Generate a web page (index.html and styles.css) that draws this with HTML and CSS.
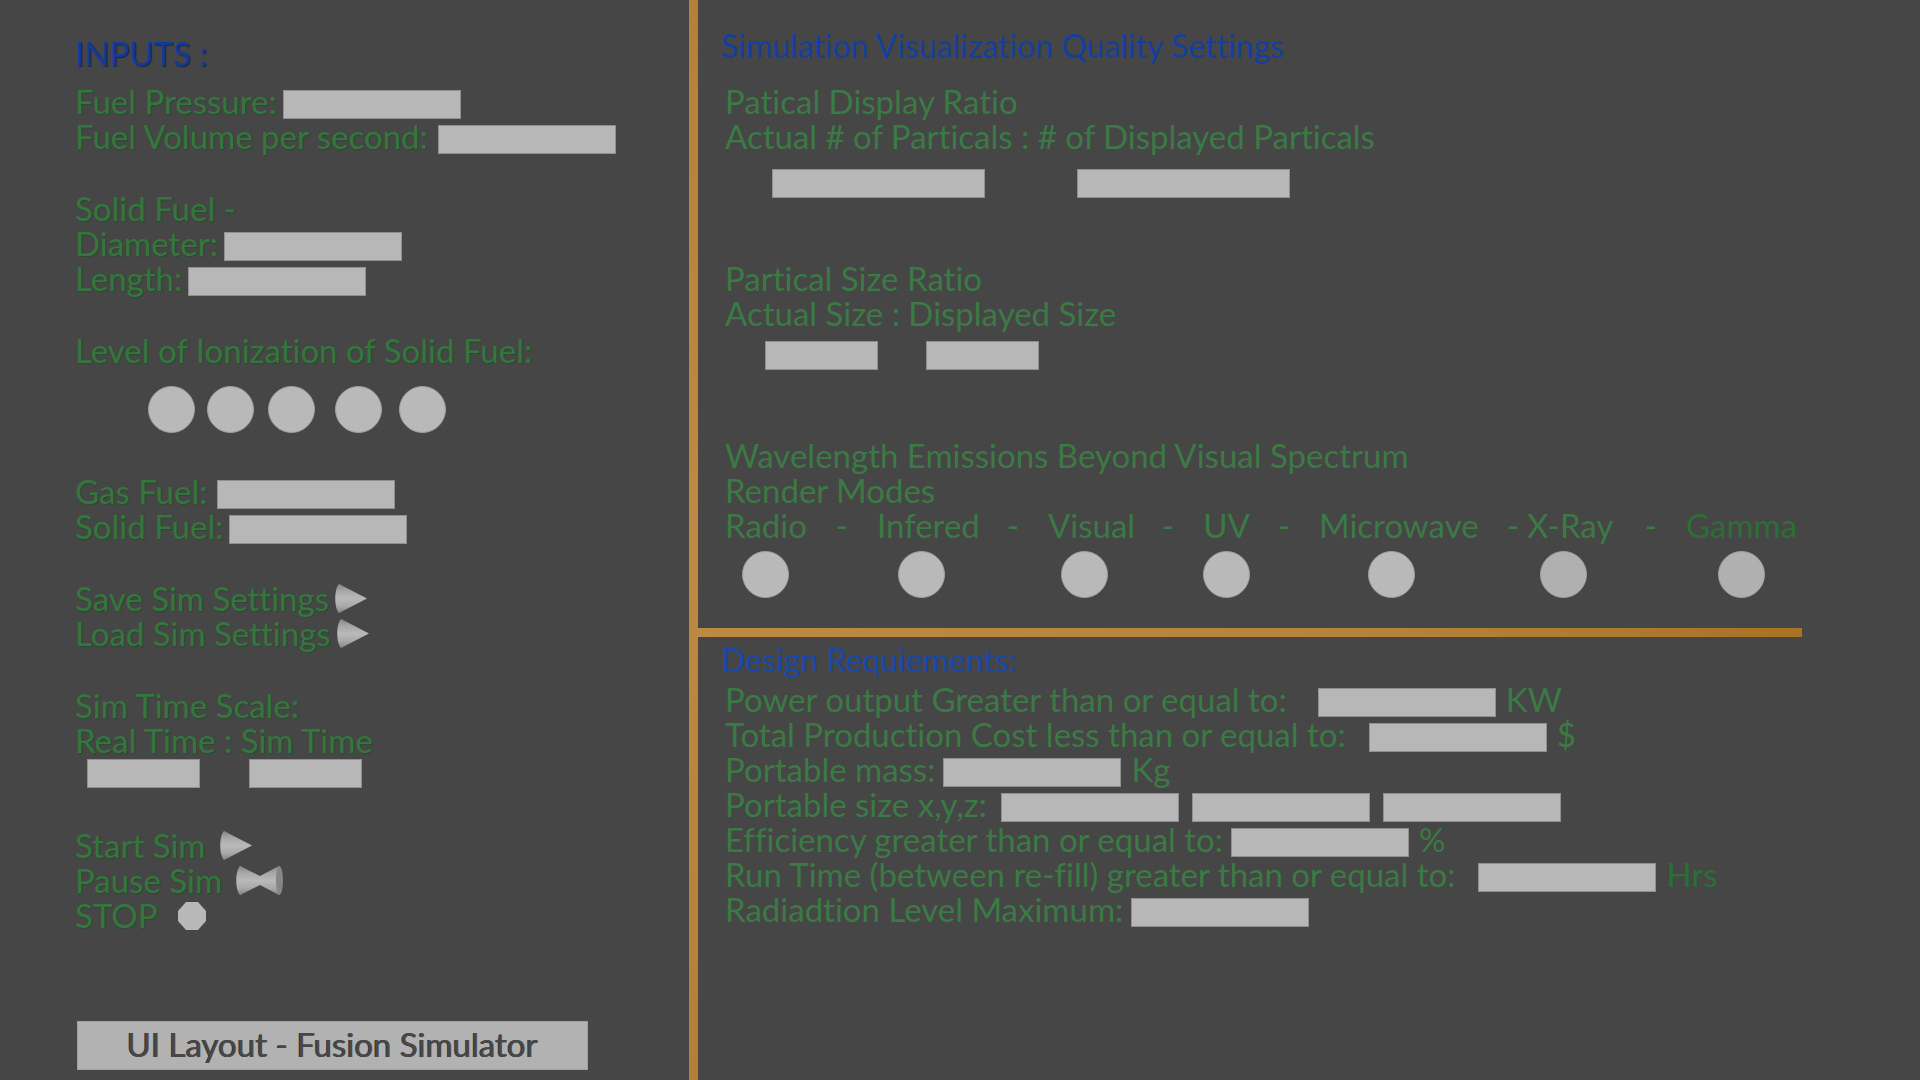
FILE: index.html
```html
<!DOCTYPE html>
<html lang="en">
<head>
<meta charset="utf-8">
<meta name="viewport" content="width=device-width, initial-scale=1">
<title>UI Layout - Fusion Simulator</title>
<link rel="stylesheet" href="styles.css">
</head>
<body>
<svg width="0" height="0" class="defs" aria-hidden="true">
  <defs>
    <linearGradient id="cone" x1="0" y1="0" x2="0" y2="1">
      <stop offset="0" stop-color="#858585"/>
      <stop offset=".25" stop-color="#a8a8a8"/>
      <stop offset=".5" stop-color="#b9b9b9"/>
      <stop offset=".75" stop-color="#aaaaaa"/>
      <stop offset="1" stop-color="#848484"/>
    </linearGradient>
    <symbol id="play" viewBox="0 0 32 29">
      <path d="M4 0 Q5 0 6 1 L32 14.500 L6 28 Q5 29 4 29 C-1 24 -1 5 4 0 Z" fill="url(#cone)"/>
    </symbol>
  </defs>
</svg>
<div class="page">
  <main class="inputs">
    <h2 class="heading heading-inputs">INPUTS :</h2>
    <form class="groups">
      <div>
        <div class="row gap-s"><label for="pressure">Fuel Pressure:</label><input class="box" id="pressure" type="text"></div>
        <div class="row gap-m"><label for="volume">Fuel Volume per second:</label><input class="box" id="volume" type="text"></div>
      </div>
      <div>
        <p class="row">Solid Fuel -</p>
        <div class="row gap-s"><label for="diameter">Diameter:</label><input class="box" id="diameter" type="text"></div>
        <div class="row gap-s"><label for="length">Length:</label><input class="box" id="length" type="text"></div>
      </div>
      <fieldset>
        <legend class="row">Level of Ionization of Solid Fuel:</legend>
        <div class="levels">
          <input class="dot" type="radio" name="level" aria-label="Level 1">
          <input class="dot" type="radio" name="level" aria-label="Level 2">
          <input class="dot" type="radio" name="level" aria-label="Level 3">
          <input class="dot" type="radio" name="level" aria-label="Level 4">
          <input class="dot" type="radio" name="level" aria-label="Level 5">
        </div>
      </fieldset>
      <div>
        <div class="row gap-m"><label for="gas">Gas Fuel:</label><input class="box" id="gas" type="text"></div>
        <div class="row gap-s"><label for="solid">Solid Fuel:</label><input class="box" id="solid" type="text"></div>
      </div>
      <div>
        <button class="row action gap-s" type="button">Save Sim Settings <svg class="cone"><use href="#play"/></svg></button>
        <button class="row action gap-s" type="button">Load Sim Settings <svg class="cone"><use href="#play"/></svg></button>
      </div>
      <fieldset>
        <legend class="row">Sim Time Scale:</legend>
        <p class="row">Real Time : Sim Time</p>
        <div class="pair pair-time">
          <input class="box box-s" type="text" aria-label="Real Time">
          <input class="box box-s" type="text" aria-label="Sim Time">
        </div>
      </fieldset>
      <div>
        <button class="row action gap-l" type="button">Start Sim <svg class="cone"><use href="#play"/></svg></button>
        <button class="row action gap-l" type="button">Pause Sim
          <svg class="bow" viewBox="0 0 47 29">
            <path d="M4 0 Q5 0 6 1 L24 10 L41 1 Q43 0 44 0 V29 Q43 29 41 28 L24 19 L6 28 Q5 29 4 29 C-1 24 -1 5 4 0 Z" fill="url(#cone)"/>
            <ellipse cx="43.500" cy="14.500" rx="3.500" ry="14" fill="#868686"/>
          </svg></button>
        <button class="row action gap-xl" type="button">STOP
          <svg class="stop" viewBox="0 0 28 28"><path d="M8 0H20L28 9V19L20 28H8L0 19V9Z" fill="#b8b8b8"/></svg></button>
      </div>
    </form>
    <h1 class="title">UI Layout - Fusion Simulator</h1>
  </main>
  <div class="divider"></div>
  <div class="settings">
    <section class="quality">
      <h2 class="heading">Simulation Visualization Quality Settings</h2>
      <fieldset class="ratio-count">
        <legend class="row">Patical Display Ratio</legend>
        <p class="row">Actual # of Particals : # of Displayed Particals</p>
        <div class="pair pair-count">
          <input class="box box-l" type="text" aria-label="Actual # of Particals">
          <input class="box box-l" type="text" aria-label="# of Displayed Particals">
        </div>
      </fieldset>
      <fieldset class="ratio-size">
        <legend class="row">Partical Size Ratio</legend>
        <p class="row">Actual Size : Displayed Size</p>
        <div class="pair pair-size">
          <input class="box box-s" type="text" aria-label="Actual Size">
          <input class="box box-s" type="text" aria-label="Displayed Size">
        </div>
      </fieldset>
      <fieldset>
        <legend class="row">Wavelength Emissions Beyond Visual Spectrum</legend>
        <p class="row">Render Modes</p>
        <div class="modes">
          <div class="mode"><label>Radio<input class="dot" type="radio" name="mode"></label><span>-</span></div>
          <div class="mode mode-left"><label>Infered<input class="dot" type="radio" name="mode"></label><span>-</span></div>
          <div class="mode mode-left"><label>Visual<input class="dot" type="radio" name="mode"></label><span>-</span></div>
          <div class="mode"><label>UV<input class="dot" type="radio" name="mode"></label><span>-</span></div>
          <div class="mode mode-left mode-tight"><label>Microwave<input class="dot" type="radio" name="mode"></label><span>-</span></div>
          <div class="mode mode-left"><label>X-Ray<input class="dot dot-dim" type="radio" name="mode"></label><span>-</span></div>
          <div class="mode"><label class="dim">Gamma<input class="dot dot-dim" type="radio" name="mode"></label></div>
        </div>
      </fieldset>
    </section>
    <hr class="rule">
    <section class="design">
      <h2 class="heading">Design Requiements:</h2>
      <form class="requirements">
        <div class="row gap-xl"><label for="power">Power output Greater than or equal to:</label><span class="value"><input class="box" id="power" type="text">KW</span></div>
        <div class="row gap-l"><label for="cost">Total Production Cost less than or equal to:</label><span class="value"><input class="box" id="cost" type="text">$</span></div>
        <div class="row gap-s"><label for="mass">Portable mass:</label><span class="value"><input class="box" id="mass" type="text">Kg</span></div>
        <div class="row gap-m"><label for="size-x">Portable size x,y,z:</label><span class="value value-xyz"><input class="box" id="size-x" type="text"><input class="box" type="text" aria-label="Portable size y"><input class="box" type="text" aria-label="Portable size z"></span></div>
        <div class="row gap-s"><label for="efficiency">Efficiency greater than or equal to:</label><span class="value"><input class="box" id="efficiency" type="text">%</span></div>
        <div class="row gap-l"><label for="runtime">Run Time (between re-fill) greater than or equal to:</label><span class="value"><input class="box" id="runtime" type="text"><span class="dim">Hrs</span></span></div>
        <div class="row gap-s"><label for="radiation">Radiadtion Level Maximum:</label><input class="box" id="radiation" type="text"></div>
      </form>
    </section>
  </div>
</div>
</body>
</html>
```
FILE: styles.css
```css
* {
  box-sizing: border-box;
  margin: 0;
  padding: 0;
}

body {
  background: #464646;
  color: #3b7a44;
  font: 33px/35px Lato, "Liberation Sans", sans-serif;
  font-variant-ligatures: none;
}

fieldset {
  border: 0;
  min-width: 0;
}

.defs {
  position: absolute;
}

.page {
  display: grid;
  grid-template-columns: 689fr 9px 1222fr;
  min-height: 100vh;
}

.divider {
  background: linear-gradient(#b48136, #bc8a42 50%, #b38036);
}

.inputs {
  display: flex;
  flex-direction: column;
  padding: 36px 72px 10px 75px;
  color: #35763f;
  text-shadow: 1px 1px 1px #2a4a2f;
}

.heading {
  font-size: 32px;
  font-weight: 400;
  color: #153f9f;
}

.heading-inputs {
  margin-bottom: 13px;
  font-size: 33px;
  color: #133a98;
  text-shadow: 1px 1px 1px #1a2546;
}

.groups {
  display: flex;
  flex-direction: column;
  gap: 37px;
}

.row {
  display: flex;
  align-items: flex-end;
  height: 35px;
  white-space: nowrap;
}

.gap-s { gap: 6px; }
.gap-m { gap: 10px; }
.gap-l { gap: 14px; }
.gap-xl { gap: 20px; }

.requirements .gap-s { gap: 8px; }
.requirements .gap-m { gap: 14px; }
.requirements .gap-l { gap: 23px; }
.requirements .gap-xl { gap: 31px; }

.box {
  width: 178px;
  height: 29px;
  padding: 0 8px;
  border: 1px solid #909090;
  background: #b7b7b7;
  color: #333;
  font: 20px Lato, "Liberation Sans", sans-serif;
}

.box-s { width: 113px; }
.box-l { width: 213px; }

.dot {
  appearance: none;
  width: 47px;
  height: 47px;
  border: 1px solid #a0a0a0;
  border-radius: 50%;
  background: #b9b9b9;
}

.dot:checked { background: #e0e0e0; }
.dot-dim { background: #b0b0b0; }

.levels {
  display: grid;
  grid-template-columns: 59px 61px 67px 64px 47px;
  padding: 18px 0 4px 73px;
}

.action {
  border: 0;
  background: none;
  color: inherit;
  font: inherit;
  font-variant-ligatures: none;
  text-shadow: inherit;
  cursor: pointer;
}

.cone {
  width: 32px;
  height: 29px;
}

.action svg { margin-bottom: 3px; }

.bow {
  width: 47px;
  height: 29px;
}

.stop {
  width: 28px;
  height: 28px;
}

.pair { display: flex; }

.pair-time {
  gap: 49px;
  padding: 1px 0 3px 12px;
}

.pair-count {
  gap: 92px;
  padding: 15px 0 0 47px;
}

.pair-size {
  gap: 48px;
  padding: 10px 0 0 40px;
}

.title {
  width: 511px;
  height: 49px;
  margin: auto 0 0 2px;
  border: 1px solid #a0a0a0;
  background: #b2b2b2;
  color: #484848;
  font-size: 33px;
  font-weight: 400;
  line-height: 44px;
  text-align: center;
  text-shadow: -1px 0 #333;
}

.settings { padding: 28px 118px 0 0; }

.quality,
.design {
  padding-left: 23px;
}

.quality > fieldset,
.requirements {
  padding-left: 4px;
}

.quality .heading { margin-bottom: 21px; }
.ratio-count { margin-bottom: 63px; }
.ratio-size { margin-bottom: 68px; }

.modes {
  display: grid;
  grid-template-columns: 152fr 171fr 155fr 116fr 208fr 159fr 116fr;
  padding-bottom: 30px;
}

.mode {
  display: flex;
  justify-content: space-between;
  padding-right: 29px;
}

.mode label {
  display: flex;
  flex-direction: column;
  align-items: center;
  gap: 8px;
}

.mode:last-child { padding-right: 0; }
.mode-tight { padding-right: 8px; }
.mode-left .dot { margin-right: 14px; }

.dim { color: #2c6e35; }

.rule {
  height: 9px;
  border: 0;
  background: linear-gradient(90deg, #bc8a42, #b5833b 60%, #a97323);
}

.design { padding-top: 5px; }

.design .heading {
  margin-bottom: 5px;
  color: #1a48a8;
}

.value {
  display: flex;
  align-items: flex-end;
  gap: 10px;
}

.value-xyz { gap: 13px; }
```
